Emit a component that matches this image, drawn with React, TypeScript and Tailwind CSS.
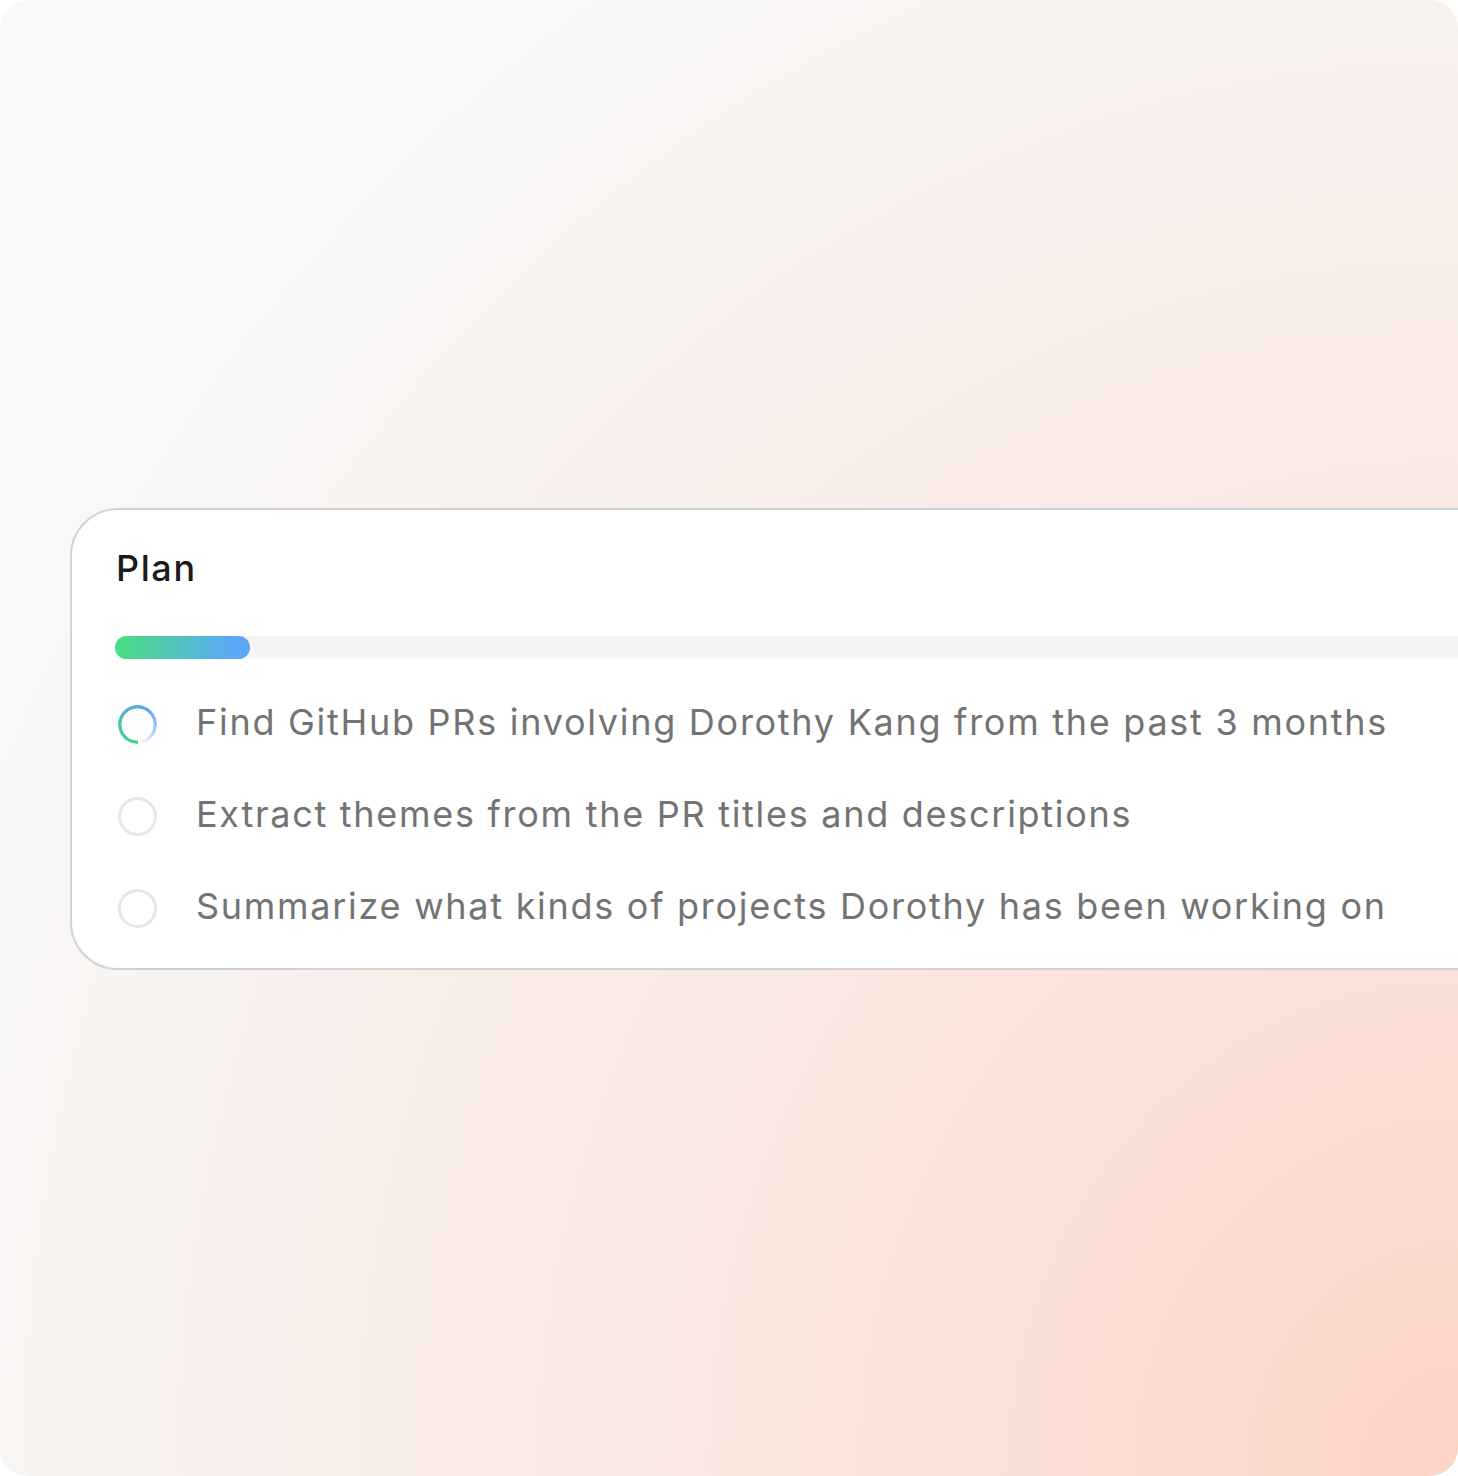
import React from 'react';

interface Step {
  label: string;
  status: 'active' | 'pending';
}

const steps: Step[] = [
  { label: 'Find GitHub PRs involving Dorothy Kang from the past 3 months', status: 'active' },
  { label: 'Extract themes from the PR titles and descriptions', status: 'pending' },
  { label: 'Summarize what kinds of projects Dorothy has been working on', status: 'pending' },
];

const StepIcon: React.FC<{ status: Step['status'] }> = ({ status }) => {
  if (status === 'active') {
    return (
      <div
        className="w-[39px] h-[39px] rounded-full shrink-0"
        style={{
          background:
            'conic-gradient(from 180deg, #3fd77f 0deg, #4cc6a0 70deg, #56b4d6 150deg, #5fa4f4 210deg, #a9cdfb 290deg, rgba(255,255,255,0) 355deg)',
          WebkitMask: 'radial-gradient(circle, transparent 15.8px, #000 16.3px)',
          mask: 'radial-gradient(circle, transparent 15.8px, #000 16.3px)',
        }}
      />
    );
  }
  return <div className="w-[39px] h-[39px] rounded-full border-[3px] border-[#e6e6e6] shrink-0" />;
};

export default function App() {
  return (
    <div className="w-[1458px] h-[1476px] bg-white" style={{ fontFamily: 'Inter, "Noto Sans", sans-serif' }}>
      <div className="w-full h-full rounded-[28px] overflow-hidden bg-[radial-gradient(ellipse_110%_120%_at_100%_100%,#fdd3c5_0%,#fbdfd6_25%,#fae8e2_50%,#f8f1ee_80%,#f8f8f8_100%)] pt-[508px] pl-[70px]">
        <div className="w-[1500px] bg-white border-2 border-[#d2d2d2] rounded-[48px] pl-[43px] pt-[36px] pb-[40px]">
          <h1 className="ml-[1px] text-[36px] leading-[44px] font-medium text-[#1a1a1a] tracking-[1.6px]">Plan</h1>
          <div className="mt-[46px] h-[23px] bg-[#f5f5f5] rounded-l-full">
            <div className="h-full w-[135px] rounded-full bg-[linear-gradient(90deg,#4ade80,#5aaaf3_85%,#60a5fa)]" />
          </div>
          <ul className="mt-[41px] flex flex-col gap-[48px]">
            {steps.map((step, index) => (
              <li key={index} className="flex items-center h-[44px]">
                <div className="ml-[3px] mt-[4px]">
                  <StepIcon status={step.status} />
                </div>
                <span className="ml-[39px] text-[36px] leading-[44px] text-[#737373] tracking-[1.72px]">
                  {step.label}
                </span>
              </li>
            ))}
          </ul>
        </div>
      </div>
    </div>
  );
}
